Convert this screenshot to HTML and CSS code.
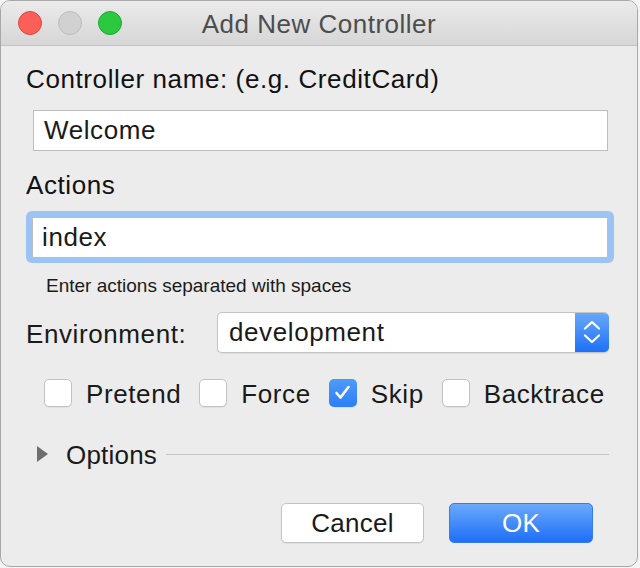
FILE: index.html
```html
<!DOCTYPE html>
<html>
<head>
<meta charset="utf-8">
<link rel="stylesheet" href="styles.css">
</head>
<body>
<div class="window">
  <div class="titlebar">
    <div class="lights">
      <span class="light red"></span>
      <span class="light gray"></span>
      <span class="light green"></span>
    </div>
    <div class="title">Add New Controller</div>
    <div></div>
  </div>
  <div class="content">
    <div class="label first">Controller name: (e.g. CreditCard)</div>
    <div class="field">Welcome</div>
    <div class="label second">Actions</div>
    <div class="focus-ring"><div class="field focused">index</div></div>
    <div class="helper">Enter actions separated with spaces</div>
    <div class="env-row">
      <div class="env-label">Environment:</div>
      <div class="select">
        <span class="select-value">development</span>
        <span class="stepper">
          <svg width="34" height="41" viewBox="0 0 34 41">
            <polyline points="10,16.5 17,10 24,16.5" fill="none" stroke="#fff" stroke-width="2.2" stroke-linecap="round" stroke-linejoin="round"/>
            <polyline points="10,23.5 17,30 24,23.5" fill="none" stroke="#fff" stroke-width="2.2" stroke-linecap="round" stroke-linejoin="round"/>
          </svg>
        </span>
      </div>
    </div>
    <div class="checks">
      <label class="check"><span class="box"></span><span>Pretend</span></label>
      <label class="check"><span class="box"></span><span>Force</span></label>
      <label class="check"><span class="box checked">
        <svg width="27" height="27" viewBox="0 0 27 27"><polyline points="7.5,14 11.5,18.5 19.5,8" fill="none" stroke="#fff" stroke-width="2.6" stroke-linecap="round" stroke-linejoin="round"/></svg>
      </span><span>Skip</span></label>
      <label class="check"><span class="box"></span><span>Backtrace</span></label>
    </div>
    <div class="options">
      <span class="triangle"></span>
      <span class="options-text">Options</span>
      <span class="rule"></span>
    </div>
    <div class="buttons">
      <div class="btn cancel">Cancel</div>
      <div class="btn ok">OK</div>
    </div>
  </div>
</div>
</body>
</html>
```
FILE: styles.css
```css
html, body {
  margin: 0;
  padding: 0;
  background: #f4f4f4;
}
body {
  font-family: "Liberation Sans", Arial, sans-serif;
  color: #1a1a1a;
}
.window {
  width: 638px;
  height: 567px;
  box-sizing: border-box;
  border: 1px solid #a8a8a8;
  border-radius: 10px;
  background: #ececec;
  overflow: hidden;
  display: flex;
  flex-direction: column;
}
.titlebar {
  height: 45px;
  box-sizing: border-box;
  border-bottom: 1px solid #c3c3c3;
  background: linear-gradient(#ebebeb, #d6d6d6);
  display: grid;
  grid-template-columns: 1fr auto 1fr;
  align-items: center;
}
.lights {
  display: flex;
  gap: 16px;
  padding-left: 17px;
}
.light {
  width: 24px;
  height: 24px;
  box-sizing: border-box;
  border-radius: 50%;
}
.red { background: #fc5f57; border: 1px solid #e0443e; }
.gray { background: #d1d1d1; border: 1px solid #bdbdbd; }
.green { background: #2ac940; border: 1px solid #1fa834; }
.title {
  font-size: 26px;
  letter-spacing: 0.5px;
  color: #4d4d4d;
  padding-top: 2px;
}
.content {
  padding: 0 29px 0 25px;
  display: flex;
  flex-direction: column;
  font-size: 26px;
  letter-spacing: 0.6px;
}
.label {
  line-height: 32px;
  color: #111;
}
.label.first { margin-top: 17px; }
.label.second { margin-top: 18px; }
.field {
  margin-left: 7px;
  height: 41px;
  box-sizing: border-box;
  border: 1px solid #bdbdbd;
  background: #fff;
  line-height: 39px;
  padding-left: 10px;
  color: #1a1a1a;
  margin-top: 15px;
}
.focus-ring {
  margin: 10px -6px 0 0;
  padding: 6px 6px 5px 6px;
  background: #9dc3f4;
  border-radius: 6px;
}
.field.focused {
  margin: 0;
  padding-left: 9px;
}
.helper {
  margin-top: 11px;
  margin-left: 20px;
  font-size: 19px;
  letter-spacing: 0;
  line-height: 24px;
  color: #1a1a1a;
}
.env-row {
  margin-top: 14px;
  display: flex;
  align-items: center;
}
.env-label {
  width: 191px;
  line-height: 32px;
  padding-top: 2px;
}
.select {
  flex: 1;
  height: 41px;
  box-sizing: border-box;
  margin-right: -1px;
  border: 1px solid #c4c4c4;
  border-right: none;
  border-radius: 5px;
  background: #fff;
  display: flex;
  align-items: center;
  overflow: hidden;
  box-shadow: 0 1px 1px rgba(0,0,0,0.06);
}
.select-value {
  flex: 1;
  padding-left: 11px;
  line-height: 39px;
}
.stepper {
  width: 34px;
  height: 41px;
  margin-top: -1px;
  margin-bottom: -1px;
  background: linear-gradient(#6aa9fa, #1c6ff7);
  border-radius: 0 5px 5px 0;
  display: flex;
}
.checks {
  margin-top: 22px;
  margin-left: 18px;
  display: flex;
  align-items: center;
  gap: 18px;
  line-height: 32px;
}
.check {
  display: flex;
  align-items: center;
  gap: 14px;
}
.check span:last-child {
  padding-top: 3px;
}
.box {
  width: 28px;
  height: 28px;
  box-sizing: border-box;
  border: 1px solid #c2c2c2;
  border-radius: 5px;
  background: #fff;
  display: flex;
  box-shadow: 0 1px 1px rgba(0,0,0,0.05);
}
.box.checked {
  border: none;
  background: linear-gradient(#4f9bfa, #2b7ff6);
}
.options {
  margin-top: 29px;
  margin-left: 11px;
  display: flex;
  align-items: center;
  line-height: 32px;
}
.triangle {
  width: 0;
  height: 0;
  border-left: 11px solid #6e6e6e;
  border-top: 8.5px solid transparent;
  border-bottom: 8.5px solid transparent;
  margin-top: -2px;
}
.options-text {
  margin-left: 18px;
  letter-spacing: 0.2px;
}
.rule {
  flex: 1;
  height: 1px;
  background: #c6c6c6;
  margin-left: 9px;
  margin-right: -1px;
  margin-top: -2px;
}
.buttons {
  margin-top: 32px;
  display: flex;
  justify-content: flex-end;
  gap: 25px;
  padding-right: 15px;
}
.btn {
  height: 40px;
  box-sizing: border-box;
  border-radius: 5px;
  text-align: center;
  line-height: 38px;
  letter-spacing: 0.3px;
}
.cancel {
  width: 143px;
  border: 1px solid #c3c3c3;
  background: #fff;
  color: #1a1a1a;
  box-shadow: 0 1px 1px rgba(0,0,0,0.06);
}
.ok {
  width: 144px;
  border: 1px solid #2f7cf3;
  background: linear-gradient(#6aa9fb, #1e6ff7);
  color: #fff;
}
```
